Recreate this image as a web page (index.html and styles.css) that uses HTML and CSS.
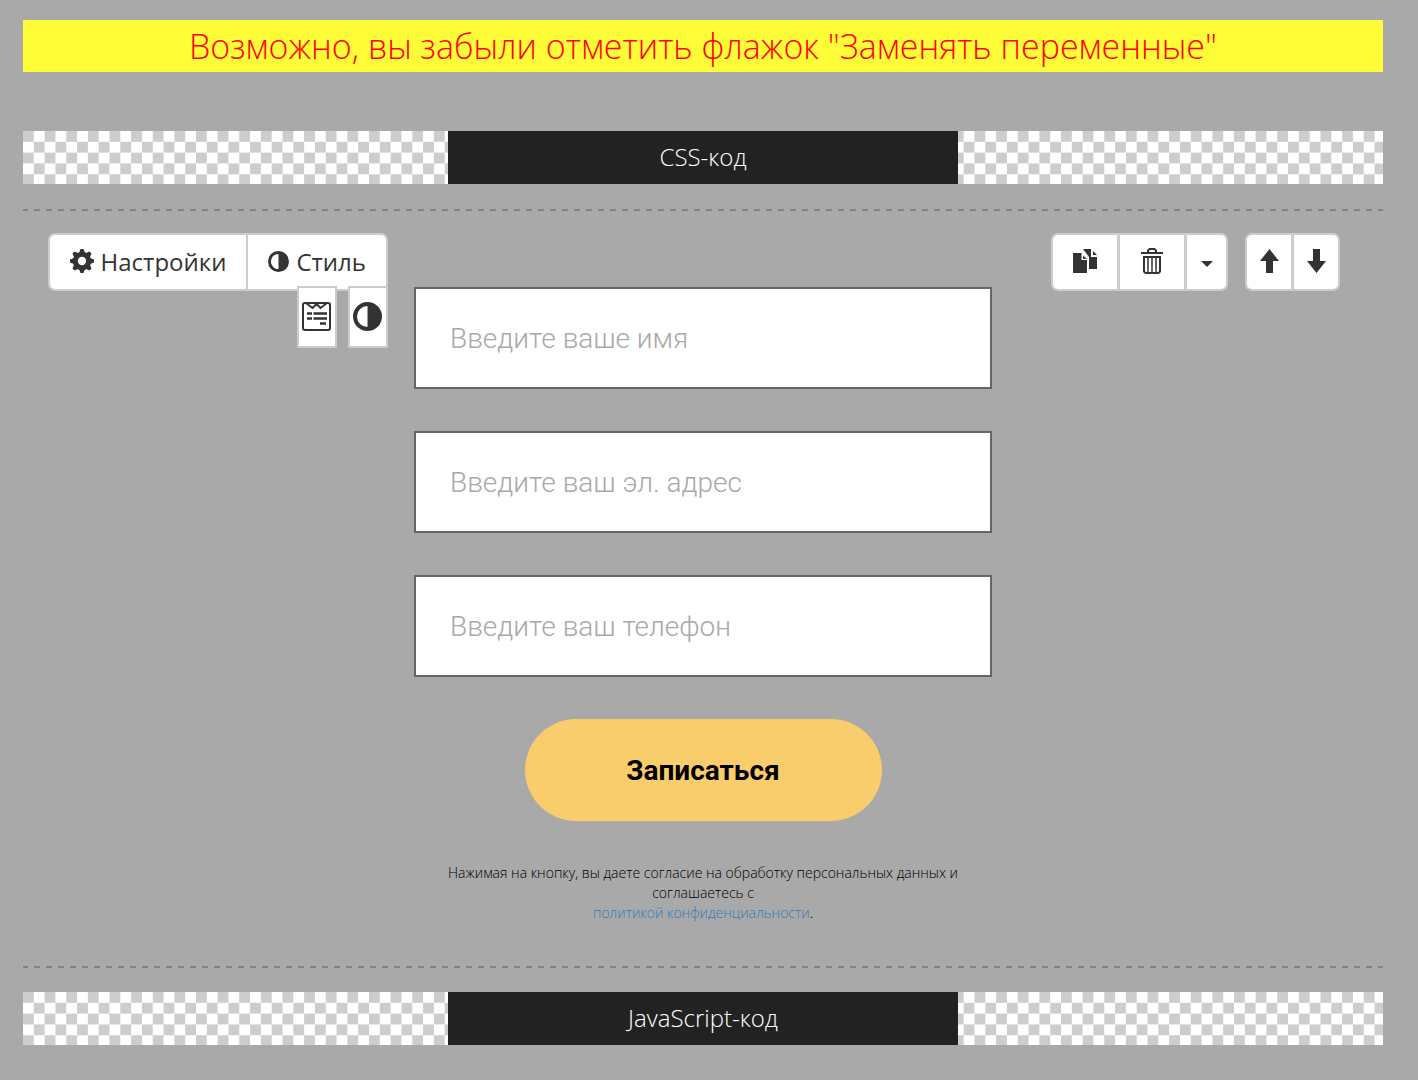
FILE: index.html
```html
<!DOCTYPE html>
<html lang="ru">
<head>
    <meta charset="UTF-8">
    <meta name="viewport" content="width=device-width, initial-scale=1.0">
    <title>Редактор формы</title>
    <link rel="stylesheet" href="styles.css">
</head>
<body>
    <p class="warning">Возможно, вы забыли отметить флажок "Заменять переменные"</p>

    <div class="code-strip">
        <button type="button" class="code-btn">CSS-код</button>
    </div>

    <main class="block">
        <div class="tools-left">
            <div class="btn-group">
                <button type="button" class="btn">
                    <svg width="24" height="24" viewBox="0 0 24 24" aria-hidden="true">
                        <circle cx="12" cy="12" r="6.7" fill="none" stroke="currentColor" stroke-width="5"/>
                        <g fill="currentColor">
                            <path d="M9 4L10.500 0h3L15 4zM9 20l1.500 4h3L15 20zM4 9l-4 1.500v3L4 15zM20 9l4 1.500v3L20 15z"/>
                            <path transform="rotate(45 12 12)" d="M9 4L10.500 0h3L15 4zM9 20l1.500 4h3L15 20zM4 9l-4 1.500v3L4 15zM20 9l4 1.500v3L20 15z"/>
                        </g>
                    </svg>
                    Настройки
                </button>
                <button type="button" class="btn">
                    <svg width="21" height="21" viewBox="0 0 29 29" aria-hidden="true">
                        <circle cx="14.5" cy="14.5" r="12.5" fill="none" stroke="currentColor" stroke-width="4"/>
                        <path d="M14.5 2a12.5 12.5 0 0 1 0 25z" fill="currentColor"/>
                    </svg>
                    Стиль
                </button>
            </div>
            <div class="mini-group">
                <button type="button" class="mini-btn" aria-label="Форма">
                    <svg width="29" height="29" viewBox="0 0 29 29" fill="none" stroke="currentColor" stroke-width="2" aria-hidden="true">
                        <rect x="1" y="1" width="27" height="27" rx="2"/>
                        <path d="M4 1l6.5 5 4-4 4 4L25 1"/>
                        <path d="M5 11.500h5M11.500 11.500H25M5 16.500h5M11.500 16.500H25M18 21.500h6" stroke-width="2.300"/>
                    </svg>
                </button>
                <button type="button" class="mini-btn" aria-label="Контраст">
                    <svg width="29" height="29" viewBox="0 0 29 29" aria-hidden="true">
                        <circle cx="14.5" cy="14.5" r="12.5" fill="none" stroke="currentColor" stroke-width="4"/>
                        <path d="M14.5 2a12.5 12.5 0 0 1 0 25z" fill="currentColor"/>
                    </svg>
                </button>
            </div>
        </div>

        <form class="lead-form">
            <input type="text" class="field" placeholder="Введите ваше имя" aria-label="Имя">
            <input type="email" class="field" placeholder="Введите ваш эл. адрес" aria-label="Эл. адрес">
            <input type="tel" class="field" placeholder="Введите ваш телефон" aria-label="Телефон">
            <button type="submit" class="submit">Записаться</button>
            <p class="agreement">Нажимая на кнопку, вы даете согласие на обработку персональных данных и соглашаетесь с<br><a href="#">политикой конфиденциальности</a>.</p>
        </form>

        <div class="tools-right">
            <div class="btn-group icons">
                <button type="button" class="btn" aria-label="Копировать">
                    <svg width="24" height="24" viewBox="0 0 24 24" fill="currentColor" aria-hidden="true">
                        <path d="M0 4h8.500v7H14v13H0z"/>
                        <path d="M10 6.500V10h4z"/>
                        <path d="M10 0h8v8h6v12h-8V8z"/>
                        <path d="M20 2v4h4z"/>
                    </svg>
                </button>
                <button type="button" class="btn" aria-label="Удалить">
                    <svg width="22" height="26" viewBox="0 0 22 26" fill="none" stroke="currentColor" stroke-width="2" aria-hidden="true">
                        <path d="M0 5h22M7 5V2.500L8.500 1h5L15 2.500V5"/>
                        <path d="M3 8v15.500L4.500 25h13l1.500-1.500V8M2 9h18"/>
                        <path d="M7 9v16M11 9v16M15 9v16" stroke-width="1.500"/>
                    </svg>
                </button>
                <button type="button" class="btn caret" aria-label="Ещё">
                    <svg width="12" height="6" viewBox="0 0 12 6" fill="currentColor" aria-hidden="true">
                        <path d="M0 0h12L6 6z"/>
                    </svg>
                </button>
            </div>
            <div class="btn-group icons arrows">
                <button type="button" class="btn" aria-label="Выше">
                    <svg width="19" height="24" viewBox="0 0 19 24" fill="currentColor" aria-hidden="true">
                        <path d="M9.500 0L19 12h-6v12H6V12H0z"/>
                    </svg>
                </button>
                <button type="button" class="btn" aria-label="Ниже">
                    <svg width="19" height="24" viewBox="0 0 19 24" fill="currentColor" aria-hidden="true">
                        <path d="M9.500 24L0 12h6V0h7v12h6z"/>
                    </svg>
                </button>
            </div>
        </div>
    </main>

    <div class="code-strip">
        <button type="button" class="code-btn">JavaScript-код</button>
    </div>
</body>
</html>
```
FILE: styles.css
```css
* {
    box-sizing: border-box;
}
body {
    margin: 0;
    padding: 20px 35px 35px 23px;
    background-color: #a9a9a9;
    font-family: "Open Sans", sans-serif;
    color: #333;
}
button {
    font-family: inherit;
    color: inherit;
    cursor: pointer;
}
svg {
    display: block;
    flex: none;
}
.warning {
    margin: 0 0 59px;
    background-color: #fffd38;
    color: #ff0000;
    font-size: 34px;
    font-weight: 300;
    line-height: 52px;
    text-align: center;
}
.code-strip {
    display: flex;
    justify-content: center;
    background: url("data:image/svg+xml,%3Csvg xmlns='http://www.w3.org/2000/svg' viewBox='0 0 16 16'%3E%3Cdefs%3E%3Cpattern id='p' width='2' height='2' patternUnits='userSpaceOnUse'%3E%3Cpath fill='%23fff' d='M0 0h2v2H0z'/%3E%3Cpath fill='%23cdcdcd' d='M0 0h1v1H0zM1 1h1v1H1z'/%3E%3C/pattern%3E%3C/defs%3E%3Cpath fill='url(%23p)' d='M0 0h16v16H0z'/%3E%3C/svg%3E") 0 0 / 173px 173px;
}
.code-btn {
    width: 37.5%;
    height: 53px;
    padding: 0 0 3px;
    border: 0;
    background-color: #222;
    color: #fff;
    font-size: 24px;
    font-weight: 300;
}
/* dashed rules above and below the edited block */
.block {
    --dash: repeating-linear-gradient(90deg, #828282 0 5px, transparent 5px 11px, #828282 11px 12px);
    display: grid;
    grid-template-columns: 1fr 42.5% 1fr;
    margin: 25px 0 24px;
    padding: 24px 0 45px;
    background: var(--dash) top / 100% 2px no-repeat, var(--dash) bottom / 100% 2px no-repeat;
}
.tools-left {
    display: flex;
    flex-direction: column;
    align-items: flex-end;
    padding-right: 26px;
}
.btn-group {
    display: flex;
    height: 58px;
    border: 2px solid #ccc;
    border-radius: 7px;
    background-color: #fff;
}
.btn {
    display: flex;
    align-items: center;
    gap: 7px;
    padding: 0 20px 2px;
    border: 0;
    background: none;
    font-size: 24px;
    white-space: nowrap;
}
.btn + .btn {
    border-left: 2px solid #ccc;
}
.mini-group {
    display: flex;
    gap: 11px;
    margin-top: -5px;
}
.mini-btn {
    display: flex;
    align-items: center;
    justify-content: center;
    width: 40px;
    height: 62px;
    padding: 0 1px 1px 0;
    border: 2px solid #ccc;
    background-color: #fff;
}
.tools-right {
    display: flex;
    justify-content: flex-end;
    gap: 17px;
    padding-right: 43px;
}
.icons .btn {
    box-sizing: content-box;
    justify-content: center;
    width: 64px;
    padding: 0 0 2px;
}
.icons .btn + .btn {
    border-left: 3px solid #ccc;
}
.icons .caret {
    width: 39px;
    padding: 3px 0 0;
}
.icons.arrows .btn {
    width: 44px;
}
.lead-form {
    display: flex;
    flex-direction: column;
    align-items: center;
    gap: 42px;
    padding-top: 54px;
}
.field {
    width: 100%;
    height: 102px;
    padding: 0 34px;
    border: 2px solid #666;
    border-radius: 0;
    background-color: #fff;
    color: #333;
    font-family: Roboto, sans-serif;
    font-size: 28px;
    font-weight: 300;
}
.field::placeholder {
    color: #a9a9a9;
    opacity: 1;
}
.submit {
    width: 357px;
    max-width: 100%;
    height: 102px;
    border: 0;
    border-radius: 51px;
    background-color: #f9cd6c;
    color: #000;
    font-family: Roboto, sans-serif;
    font-size: 28px;
    font-weight: 700;
}
.agreement {
    margin: 0;
    color: #000;
    font-size: 14px;
    font-weight: 300;
    line-height: 20px;
    text-align: center;
}
.agreement a {
    color: #337ab7;
    text-decoration: none;
}
```
